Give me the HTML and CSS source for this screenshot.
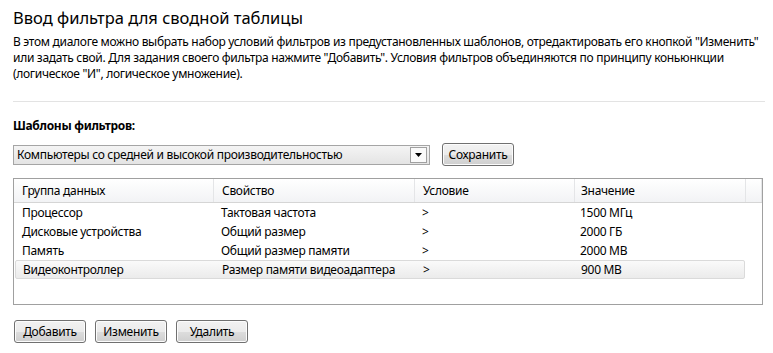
FILE: index.html
```html
<!DOCTYPE html>
<html lang="ru">
<head>
<meta charset="utf-8">
<title>Ввод фильтра</title>
<link rel="stylesheet" href="styles.css">
</head>
<body>
<div class="dialog">
  <h1 class="title">Ввод фильтра для сводной таблицы</h1>
  <p class="intro">В этом диалоге можно выбрать набор условий фильтров из предустановленных шаблонов, отредактировать его кнопкой "Изменить" или задать свой. Для задания своего фильтра нажмите "Добавить". Условия фильтров объединяются по принципу коньюнкции (логическое "И", логическое умножение).</p>
  <div class="sep"></div>

  <div class="label">Шаблоны фильтров:</div>
  <div class="tpl-row">
    <div class="combo">
      <span class="combo-text">Компьютеры со средней и высокой производительностью</span>
      <span class="combo-btn">
        <svg width="7" height="4" viewBox="0 0 7 4"><path d="M0 0h7L3.5 4z" fill="#000"/></svg>
      </span>
    </div>
    <button class="btn btn-save">Сохранить</button>
  </div>

  <div class="grid">
    <div class="grid-head">
      <div class="hc">Группа данных</div>
      <div class="hc">Свойство</div>
      <div class="hc">Условие</div>
      <div class="hc">Значение</div>
      <div class="hc"></div>
    </div>
    <div class="grid-row">
      <div>Процессор</div><div>Тактовая частота</div><div>&gt;</div><div>1500 МГц</div>
    </div>
    <div class="grid-row">
      <div>Дисковые устройства</div><div>Общий размер</div><div>&gt;</div><div>2000 ГБ</div>
    </div>
    <div class="grid-row">
      <div>Память</div><div>Общий размер памяти</div><div>&gt;</div><div>2000 MB</div>
    </div>
    <div class="grid-row selected">
      <div>Видеоконтроллер</div><div>Размер памяти видеоадаптера</div><div>&gt;</div><div>900 MB</div>
    </div>
  </div>

  <div class="actions">
    <button class="btn">Добавить</button>
    <button class="btn">Изменить</button>
    <button class="btn">Удалить</button>
  </div>
</div>
</body>
</html>
```

FILE: styles.css
```css
body {
	margin: 0;
	background: #fff;
	font-family: "Noto Sans", "Open Sans", sans-serif;
	font-size: 12px;
	letter-spacing: -0.3px;
	color: #000;
}
.dialog {
	padding: 6px 8px 0 13px;
}
.title {
	margin: 0;
	font-size: 16.5px;
	font-weight: normal;
	letter-spacing: 0;
	line-height: 23px;
}
.intro {
	margin: 5px 0 0 0;
	line-height: 16px;
	padding-right: 4px;
}
.sep {
	height: 1px;
	background: #e3e3e3;
	margin: 19px 0 0 0;
	width: 752px;
}
.label {
	font-weight: bold;
	margin-top: 15px;
	line-height: 17px;
}
.tpl-row {
	display: flex;
	align-items: center;
	gap: 12px;
	margin-top: 9px;
}
.combo {
	width: 415px;
	height: 18px;
	border: 1px solid #a5a5a5;
	background: linear-gradient(#f4f4f4, #e4e4e4);
	display: flex;
	align-items: center;
	justify-content: space-between;
}
.combo-text {
	padding-left: 3px;
	line-height: 16px;
}
.combo-btn {
	width: 15px;
	height: 14px;
	margin-right: 2px;
	border: 1px solid #a0a0a0;
	background: #fafafa;
	display: flex;
	align-items: center;
	justify-content: center;
}
.btn {
	font-family: inherit;
	font-size: 12px;
	letter-spacing: -0.3px;
	height: 23px;
	width: 72px;
	padding: 0;
	border: 1px solid #707070;
	border-radius: 3px;
	background: linear-gradient(#f2f2f2 0%, #ebebeb 50%, #dddddd 51%, #cfcfcf 100%);
	box-shadow: inset 0 0 0 1px #fcfcfc;
	color: #000;
}
.grid {
	margin-top: 12px;
	width: 748px;
	height: 125px;
	border: 1px solid #a0a0a0;
}
.grid-head,
.grid-row {
	display: grid;
	grid-template-columns: 200px 201px 160px 171px 1fr;
}
.grid-head {
	height: 23px;
	background: linear-gradient(#ffffff, #f2f3f5);
	border-bottom: 1px solid #d5d5d5;
}
.hc {
	line-height: 23px;
	padding-left: 8px;
	border-right: 1px solid #e4e5e7;
}
.hc:nth-child(4) {
	padding-left: 6px;
}
.grid-row {
	height: 19px;
	line-height: 19px;
	margin: 0 17px 0 1px;
	grid-template-columns: 199px 201px 160px 1fr;
}
.grid-row > div {
	padding-left: 7px;
}
.grid-row > div:nth-child(4) {
	padding-left: 5px;
}
.grid-row.selected {
	border: 1px solid #dadada;
	border-radius: 2px;
	background: linear-gradient(#fafafa, #ebebeb);
	height: 17px;
	line-height: 17px;
}
.actions {
	display: flex;
	gap: 9px;
	margin-top: 15px;
	padding-left: 1px;
}
```
